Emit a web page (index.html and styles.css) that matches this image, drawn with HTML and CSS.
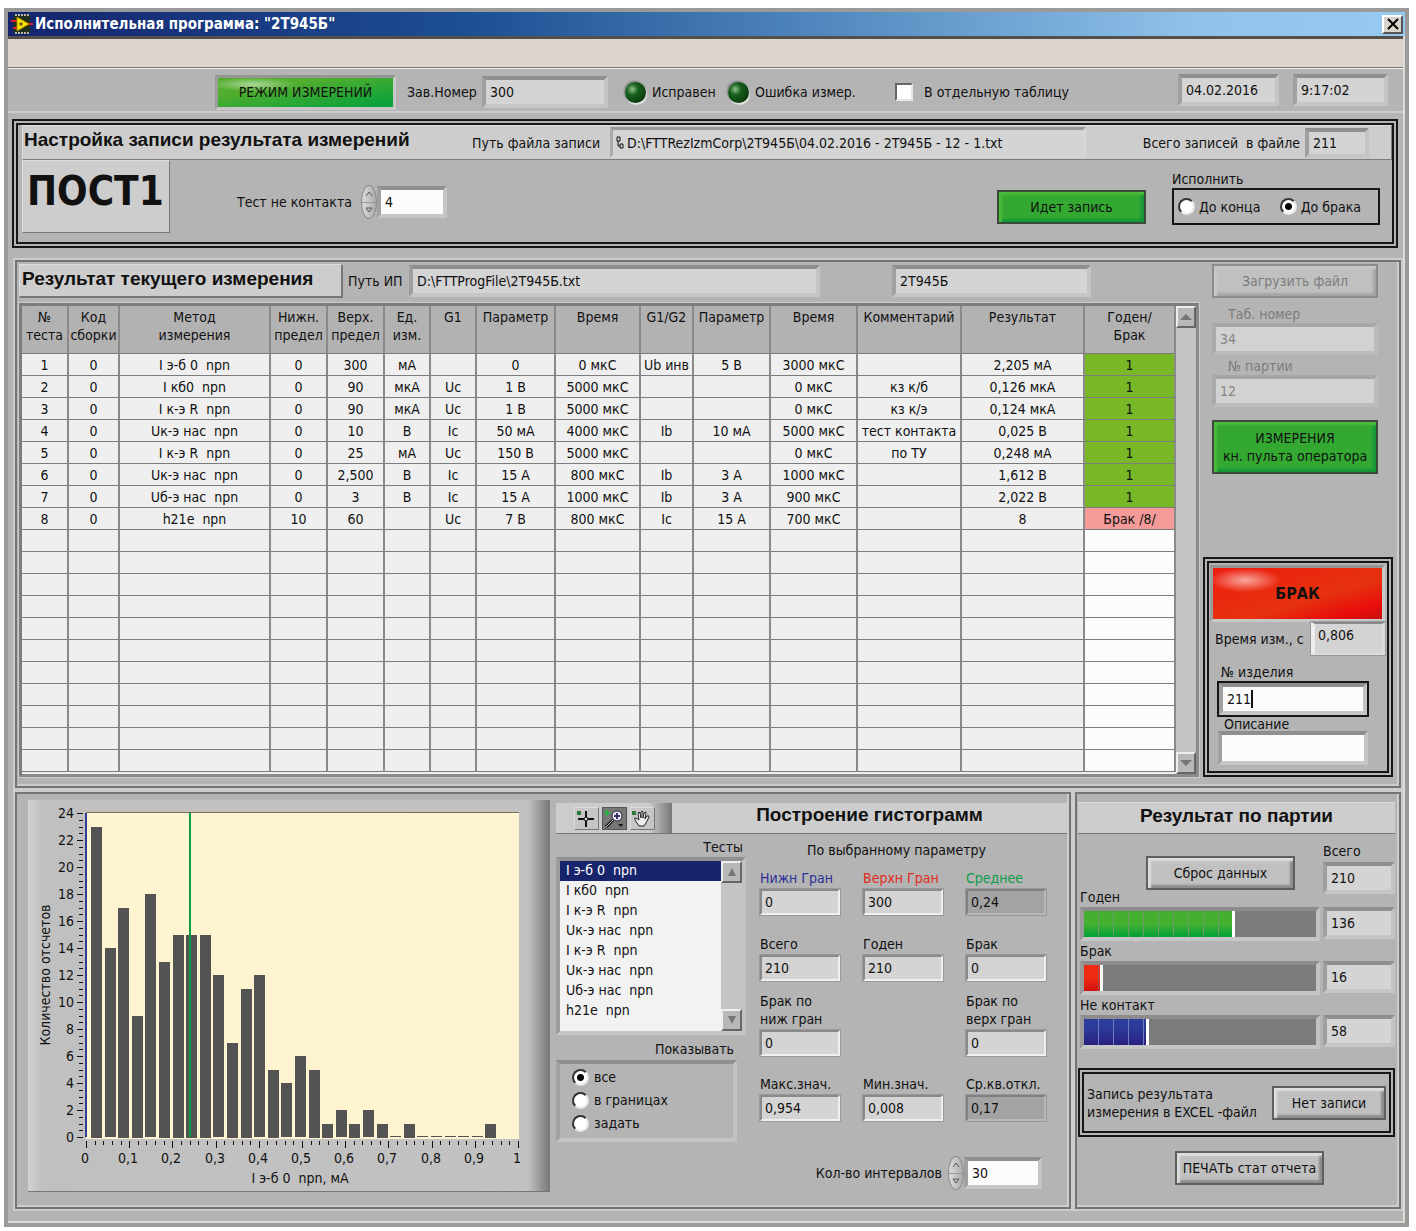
FILE: index.html
```html
<!DOCTYPE html>
<html lang="ru">

<head>
    <meta charset="UTF-8">
    <meta name="viewport" content="width=device-width, initial-scale=1.0">
    <title>Исполнительная программа: "2Т945Б"</title>
    <link rel="stylesheet" href="styles.css">
</head>

<body>
    <div class="window">
        <div class="titlebar">
            <svg class="app-icon" width="22" height="20" viewBox="0 0 22 20">
                <rect x="3" y="1" width="16" height="18" fill="#20301c"/>
                <path d="M4 1h14M4 19h14" stroke="#b9b9a0" stroke-width="2" stroke-dasharray="2 1"/>
                <path d="M0 7h7M15 10h7M2 14h5" stroke="#e02020" stroke-width="2"/>
                <path d="M6 3l12 7-12 7z" fill="#ffe400" stroke="#a88a00"/>
                <path d="M8 10h4M10 8v4" stroke="#333" stroke-width="1"/>
            </svg>
            <h1>Исполнительная программа: "2Т945Б"</h1>
            <button class="close-btn" aria-label="Закрыть">
                <svg width="12" height="12" viewBox="0 0 12 12"><path d="M1 1l10 10M11 1L1 11" stroke="#000" stroke-width="2"/></svg>
            </button>
        </div>
        <div class="menubar"></div>

        <div class="toolbar">
            <div class="lamp lamp-green mode">РЕЖИМ ИЗМЕРЕНИЙ</div>
            <div class="tool serial">
                <label for="serial">Зав.Номер</label>
                <input class="field" id="serial" value="300" readonly>
            </div>
            <div class="tool led-ok"><span class="led"></span>Исправен</div>
            <div class="tool led-err"><span class="led"></span>Ошибка измер.</div>
            <label class="tool"><input type="checkbox" class="check">В отдельную таблицу</label>
            <div class="clock">
                <input class="field date" value="04.02.2016" aria-label="Дата" readonly>
                <input class="field time" value="9:17:02" aria-label="Время" readonly>
            </div>
        </div>

        <!-- Recording setup -->
        <div class="frame setup">
            <div class="strip">
                <h2>Настройка записи результата измерений</h2>
                <label for="recPath">Путь файла записи</label>
                <div class="path">
                    <svg width="8" height="14" viewBox="0 0 8 14"><path d="M1 1h3v4H1zM4 8h3v4H4zM2 5v5h2" fill="none" stroke="#111"/></svg>
                    <input id="recPath" value="D:\FTTRezIzmCorp\2Т945Б\04.02.2016 - 2Т945Б - 12 - 1.txt" readonly>
                </div>
                <label class="total-label" for="recTotal">Всего записей&nbsp; в файле</label>
                <input class="field rec-total" id="recTotal" value="211" readonly>
            </div>
            <div class="setup-body">
                <div class="post">ПОСТ1</div>
                <div class="contact">
                    <label for="contactTest">Тест не контакта</label>
                    <div class="spin">
                        <button aria-label="Больше"><svg width="8" height="8" viewBox="0 0 8 8"><path d="M1 6l3-4 3 4" fill="none" stroke="#555"/></svg></button>
                        <button aria-label="Меньше"><svg width="8" height="8" viewBox="0 0 8 8"><path d="M1 2h6l-3 4z" fill="none" stroke="#555"/></svg></button>
                    </div>
                    <input class="field edit" id="contactTest" value="4">
                </div>
                <button class="btn btn-green rec-btn">Идет запись</button>
                <fieldset class="run-mode">
                    <legend>Исполнить</legend>
                    <div class="run-options">
                        <label><input type="radio" name="run">До конца</label>
                        <label><input type="radio" name="run" checked>До брака</label>
                    </div>
                </fieldset>
            </div>
        </div>

        <!-- Current measurement -->
        <div class="panel results">
            <div class="results-main">
                <div class="results-head">
                    <h2 class="plate">Результат текущего измерения</h2>
                    <label for="progPath">Путь ИП</label>
                    <input class="field prog-path" id="progPath" value="D:\FTTProgFile\2Т945Б.txt" readonly>
                    <input class="field prog-name" value="2Т945Б" aria-label="Прибор" readonly>
                </div>
                <div class="table-frame">
                    <table>
                        <colgroup>
                            <col class="w47"><col class="w51"><col class="w151"><col class="w57"><col class="w57">
                            <col class="w46"><col class="w46"><col class="w79"><col class="w85"><col class="w53">
                            <col class="w77"><col class="w87"><col class="w104"><col class="w123"><col class="w91">
                        </colgroup>
                        <thead>
                            <tr>
                                <th>№<br>теста</th>
                                <th>Код<br>сборки</th>
                                <th>Метод<br>измерения</th>
                                <th>Нижн.<br>предел</th>
                                <th>Верх.<br>предел</th>
                                <th>Ед.<br>изм.</th>
                                <th>G1</th>
                                <th>Параметр</th>
                                <th>Время</th>
                                <th>G1/G2</th>
                                <th>Параметр</th>
                                <th>Время</th>
                                <th>Комментарий</th>
                                <th>Результат</th>
                                <th>Годен/<br>Брак</th>
                            </tr>
                        </thead>
                        <tbody id="rows"></tbody>
                    </table>
                    <div class="scroll">
                        <button aria-label="Вверх"><svg width="12" height="8" viewBox="0 0 12 8"><path d="M0 7l6-6 6 6z" fill="#777"/></svg></button>
                        <button aria-label="Вниз"><svg width="12" height="8" viewBox="0 0 12 8"><path d="M0 1l6 6 6-6z" fill="#777"/></svg></button>
                    </div>
                </div>
            </div>

            <div class="side">
                <div class="side-top">
                    <button class="btn load" disabled>Загрузить файл</button>
                    <label for="tabNo">Таб. номер</label>
                    <input class="field" id="tabNo" value="34" disabled>
                    <label for="lotNo">№ партии</label>
                    <input class="field" id="lotNo" value="12" disabled>
                    <button class="btn btn-green measure">ИЗМЕРЕНИЯ<br>кн. пульта оператора</button>
                </div>
                <div class="frame verdict">
                    <div class="lamp lamp-red">БРАК</div>
                    <div class="elapsed">
                        <label for="elapsed">Время изм., с</label>
                        <input class="mini" id="elapsed" value="0,806" readonly>
                    </div>
                    <label class="item-label" for="itemNo">№ изделия</label>
                    <div class="focus-box"><input class="field edit" id="itemNo" value="211"><span class="caret"></span></div>
                    <label class="note-label" for="note">Описание</label>
                    <input class="field edit note" id="note">
                </div>
            </div>
        </div>

        <div class="bottom">
            <!-- Histogram -->
            <div class="panel histogram">
                <div class="chart">
                    <svg id="chart" width="522" height="392" viewBox="0 0 522 392"></svg>
                </div>
                <div class="hist-side">
                    <div class="hist-head">
                        <div class="tools">
                            <button aria-label="Курсор"><svg width="22" height="20" viewBox="0 0 22 20"><path d="M2 3h4v4H2z" fill="#2d7a38"/><path d="M3 11h16M11 3v16" stroke="#111" stroke-width="2"/><circle cx="11" cy="11" r="2" fill="#ccc" stroke="#111"/></svg></button>
                            <button class="active" aria-label="Масштаб"><svg width="22" height="20" viewBox="0 0 22 20"><path d="M1 5h6M4 2v6" stroke="#33b045" stroke-width="2"/><path d="M10 12l-7 7" stroke="#111" stroke-width="3"/><path d="M10 12l-7 7" stroke="#ccc"/><circle cx="14" cy="8" r="5" fill="#eef" stroke="#223"/><path d="M11 8h6M14 5v6" stroke="#336" stroke-width="2"/><path d="M15 16h5l-2 3z" fill="#111"/></svg></button>
                            <button aria-label="Сдвиг"><svg width="22" height="20" viewBox="0 0 22 20"><path d="M1 3h4v4H1z" fill="#2d7a38"/><path d="M8 18l-4-6q-1-3 1-2l3 2-1-7q1-2 2 0l1 5V4q1-2 2 0v6l1-5q2-2 2 0l-1 6 2-3q2-1 2 1l-3 6-2 3z" fill="#eee" stroke="#222"/></svg></button>
                        </div>
                        <h2>Построение гистограмм</h2>
                    </div>
                    <div class="hist-body">
                        <div class="hist-left">
                            <label for="tests">Тесты</label>
                            <div class="listbox">
                                <select id="tests" size="8">
                                    <option selected>I э-б 0&nbsp; npn</option>
                                    <option>I кб0&nbsp; npn</option>
                                    <option>I к-э R&nbsp; npn</option>
                                    <option>Uк-э нас&nbsp; npn</option>
                                    <option>I к-э R&nbsp; npn</option>
                                    <option>Uк-э нас&nbsp; npn</option>
                                    <option>Uб-э нас&nbsp; npn</option>
                                    <option>h21e&nbsp; npn</option>
                                </select>
                                <div class="scroll">
                                    <button aria-label="Вверх"><svg width="10" height="10" viewBox="0 0 10 10"><path d="M1 9l4-8 4 8z" fill="#777"/></svg></button>
                                    <button aria-label="Вниз"><svg width="10" height="10" viewBox="0 0 10 10"><path d="M1 1l4 8 4-8z" fill="#777"/></svg></button>
                                </div>
                            </div>
                            <span class="show-label" id="showLabel">Показывать</span>
                            <div class="show-box" role="radiogroup" aria-labelledby="showLabel">
                                <label><input type="radio" name="show" checked>все</label>
                                <label><input type="radio" name="show">в границах</label>
                                <label><input type="radio" name="show">задать</label>
                            </div>
                        </div>
                        <div class="hist-right">
                            <h3>По выбранному параметру</h3>
                            <div class="stats">
                                <div class="stat"><label class="blue" for="s1">Нижн Гран</label><input class="mini" id="s1" value="0" readonly></div>
                                <div class="stat"><label class="red" for="s2">Верхн Гран</label><input class="mini" id="s2" value="300" readonly></div>
                                <div class="stat"><label class="green" for="s3">Среднее</label><input class="mini dark" id="s3" value="0,24" readonly></div>
                                <div class="stat"><label for="s4">Всего</label><input class="mini" id="s4" value="210" readonly></div>
                                <div class="stat"><label for="s5">Годен</label><input class="mini" id="s5" value="210" readonly></div>
                                <div class="stat"><label for="s6">Брак</label><input class="mini" id="s6" value="0" readonly></div>
                                <div class="stat"><label for="s7">Брак по<br>ниж гран</label><input class="mini" id="s7" value="0" readonly></div>
                                <div class="stat last-col"><label for="s8">Брак по<br>верх гран</label><input class="mini" id="s8" value="0" readonly></div>
                                <div class="stat"><label for="s9">Макс.знач.</label><input class="mini" id="s9" value="0,954" readonly></div>
                                <div class="stat"><label for="s10">Мин.знач.</label><input class="mini" id="s10" value="0,008" readonly></div>
                                <div class="stat"><label for="s11">Ср.кв.откл.</label><input class="mini dark" id="s11" value="0,17" readonly></div>
                            </div>
                            <div class="intervals">
                                <label for="intervals">Кол-во интервалов</label>
                                <div class="spin">
                                    <button aria-label="Больше"><svg width="8" height="8" viewBox="0 0 8 8"><path d="M1 6l3-4 3 4" fill="none" stroke="#555"/></svg></button>
                                    <button aria-label="Меньше"><svg width="8" height="8" viewBox="0 0 8 8"><path d="M1 2h6l-3 4z" fill="none" stroke="#555"/></svg></button>
                                </div>
                                <input class="field edit" id="intervals" value="30">
                            </div>
                        </div>
                    </div>
                </div>
            </div>

            <!-- Lot totals -->
            <div class="panel lot">
                <h2>Результат по партии</h2>
                <div class="lot-top">
                    <button class="btn">Сброс данных</button>
                    <div class="lot-total">
                        <label for="lotTotal">Всего</label>
                        <input class="field" id="lotTotal" value="210" readonly>
                    </div>
                </div>
                <div class="lot-row first">
                    <label for="good">Годен</label>
                    <div class="bar"><div class="fill fill-green" style="width: 65%"></div></div>
                    <input class="field" id="good" value="136" readonly>
                </div>
                <div class="lot-row">
                    <label for="bad">Брак</label>
                    <div class="bar"><div class="fill fill-red" style="width: 8%"></div></div>
                    <input class="field" id="bad" value="16" readonly>
                </div>
                <div class="lot-row">
                    <label for="noContact">Не контакт</label>
                    <div class="bar"><div class="fill fill-blue" style="width: 28%"></div></div>
                    <input class="field" id="noContact" value="58" readonly>
                </div>
                <div class="frame excel">
                    <span>Запись результата<br>измерения в EXCEL -файл</span>
                    <button class="btn">Нет записи</button>
                </div>
                <button class="btn print">ПЕЧАТЬ стат отчета</button>
            </div>
        </div>
    </div>

    <script>
        var tests = [
            ["1", "0", "I э-б 0  npn", "0", "300", "мА", "", "0", "0 мкС", "Ub инв", "5 В", "3000 мкС", "", "2,205 мА", "1"],
            ["2", "0", "I кб0  npn", "0", "90", "мкА", "Uc", "1 В", "5000 мкС", "", "", "0 мкС", "кз к/б", "0,126 мкА", "1"],
            ["3", "0", "I к-э R  npn", "0", "90", "мкА", "Uc", "1 В", "5000 мкС", "", "", "0 мкС", "кз к/э", "0,124 мкА", "1"],
            ["4", "0", "Uк-э нас  npn", "0", "10", "В", "Ic", "50 мА", "4000 мкС", "Ib", "10 мА", "5000 мкС", "тест контакта", "0,025 В", "1"],
            ["5", "0", "I к-э R  npn", "0", "25", "мА", "Uc", "150 В", "5000 мкС", "", "", "0 мкС", "по ТУ", "0,248 мА", "1"],
            ["6", "0", "Uк-э нас  npn", "0", "2,500", "В", "Ic", "15 А", "800 мкС", "Ib", "3 А", "1000 мкС", "", "1,612 В", "1"],
            ["7", "0", "Uб-э нас  npn", "0", "3", "В", "Ic", "15 А", "1000 мкС", "Ib", "3 А", "900 мкС", "", "2,022 В", "1"],
            ["8", "0", "h21e  npn", "10", "60", "", "Uc", "7 В", "800 мкС", "Ic", "15 А", "700 мкС", "", "8", "Брак /8/"]
        ];
        var rowCount = 19;
        var columnCount = 15;

        var rows = document.getElementById("rows");
        for (var r = 0; r < rowCount; r++) {
            var tr = document.createElement("tr");
            for (var c = 0; c < columnCount; c++) {
                var td = document.createElement("td");
                td.textContent = tests[r] ? tests[r][c] : "";
                if (tests[r] && c === columnCount - 1) {
                    td.className = tests[r][c] === "1" ? "pass" : "fail";
                }
                tr.appendChild(td);
            }
            rows.appendChild(tr);
        }

        // Histogram: 30 intervals, counts on the left axis
        var counts = [23, 14, 17, 9, 18, 13, 15, 15, 15, 12, 7, 11, 12, 5, 4, 6, 5, 1, 2, 1, 2, 1, 0, 1, 0, 0, 0, 0, 0, 1];
        var chart = document.getElementById("chart");
        var left = 58, top0 = 13, width = 432, height = 324;
        var bottom = top0 + height;

        function add(name, attrs, text) {
            var el = document.createElementNS("http://www.w3.org/2000/svg", name);
            for (var key in attrs) {
                el.setAttribute(key, attrs[key]);
            }
            if (text) {
                el.textContent = text;
            }
            chart.appendChild(el);
        }

        add("rect", { x: left, y: top0, width: width + 1, height: height + 2, "class": "plot" });
        add("rect", { x: left, y: top0 - 1, width: width + 1, height: 1, "class": "plot-top" });
        counts.forEach(function (n, i) {
            var h = Math.max(n * height / 24, 1);
            add("rect", { x: Math.round(left + 5 + i * 13.6), y: Math.round(bottom - h), width: 11, height: Math.round(h), "class": "column" });
        });
        add("rect", { x: left - 1, y: top0, width: 2, height: height, "class": "low-limit" });
        add("rect", { x: left + Math.round(0.24 * width) - 1, y: top0, width: 2, height: height, "class": "mean" });

        for (var i = 0; i <= 48; i++) {
            var y = Math.round(bottom - i * height / 48);
            var major = i % 4 === 0;
            add("rect", { x: left - (major ? 9 : 7), y: y, width: major ? 6 : 4, height: 1, "class": "tick" });
            if (major) {
                add("text", { x: left - 12, y: y + 5, "text-anchor": "end" }, String(i / 2));
            }
        }
        for (var k = 0; k <= 50; k++) {
            var x = Math.round(left + k * width / 50);
            var big = k % 5 === 0;
            add("rect", { x: x, y: bottom + 4, width: 1, height: big ? 7 : 4, "class": "tick" });
            if (big) {
                add("text", { x: x - 1, y: bottom + 26, "text-anchor": "middle" }, String(k / 50).replace(".", ","));
            }
        }
        add("text", { x: 272, y: 383, "text-anchor": "middle", "class": "axis" }, "I э-б 0\u00a0 npn, мА");
        add("text", { x: 0, y: 0, transform: "translate(22 175) rotate(-90)", "text-anchor": "middle", "class": "axis" }, "Количество отсчетов");
    </script>
</body>

</html>
```
FILE: styles.css
```css
* {
    box-sizing: border-box;
}

body {
    margin: 0;
    padding: 8px 7px 5px 4px;
    background: #fff;
    color: #111;
    font-family: Tahoma, "DejaVu Sans Condensed", "Noto Sans", sans-serif;
    font-size: 14px;
    line-height: 18px;
}

h1, h2, h3, fieldset {
    margin: 0;
    padding: 0;
}

h2 {
    font-family: Arial, "Liberation Sans", sans-serif;
    font-size: 19px;
    line-height: 24px;
    white-space: nowrap;
}

input, button, select {
    font: inherit;
    color: inherit;
}

button {
    padding: 0;
}

label {
    white-space: nowrap;
}

.window {
    border: 4px solid #9a9a9a;
    background: #b4b4b4;
    box-shadow: inset -2px -2px 0 #dedad4;
    min-width: 1380px;
}

/* Title bar */
.titlebar {
    display: flex;
    align-items: center;
    gap: 2px;
    height: 24px;
    padding: 0 2px 0 3px;
    background: linear-gradient(to right, #14246e, #1c4f93 33%, #4a80b9 55%, #8fc3ea 85%, #97caf0);
    color: #fff;
}

.titlebar h1 {
    font-size: 15px;
    line-height: 22px;
}

.close-btn {
    display: flex;
    align-items: center;
    justify-content: center;
    width: 21px;
    height: 19px;
    margin-left: auto;
    background: #d8d4cc;
    border: 2px solid;
    border-color: #fff #555 #555 #fff;
}

.menubar {
    height: 32px;
    margin-right: 2px;
    background: #dad4cd;
    border-top: 3px solid #55504c;
    border-bottom: 1px solid #777;
}

/* Bevelled controls */
.field {
    height: 32px;
    min-width: 0;
    padding: 0 4px;
    background: #d4d4d4;
    border: 4px solid;
    border-color: #8f8f8f #c4c4c4 #c6c6c6 #a0a0a0;
    border-radius: 0;
    outline: none;
}

.field.edit {
    background: #fcfcfc;
}

.field:disabled {
    color: #858585;
    background: #d2d2d2;
    border-color: #a6a6a6 #bcbcbc #bcbcbc #aaa;
}

.mini {
    width: 80px;
    height: 26px;
    padding: 0 3px;
    background: #d4d4d4;
    border: 2px solid;
    border-color: #8a8a8a #f0f0f0 #f0f0f0 #8a8a8a;
    outline: 1px solid #999;
    outline-offset: 0;
}

.mini.dark {
    background: #a3a3a3;
    border-color: #808080 #b8b8b8 #b8b8b8 #808080;
}

.btn {
    height: 34px;
    background: #c0c0c0;
    border: 2px solid #5f5f5f;
    border-radius: 0;
    box-shadow: inset 3px 3px 2px #dedede, inset -3px -3px 2px #8c8c8c;
    white-space: nowrap;
}

.btn:disabled {
    color: #7c7c7c;
    border-color: #8c8c8c;
    box-shadow: inset 3px 3px 2px #c8c8c8, inset -3px -3px 2px #a4a4a4;
}

.btn-green {
    background: #34a932;
    border-color: #3c4a3c;
    box-shadow: inset 3px 3px 2px #4cba3c, inset -3px -3px 3px #12963a;
}

.lamp {
    display: flex;
    align-items: center;
    justify-content: center;
    border: 3px solid;
    border-color: #959595 #c8c8c8 #c8c8c8 #9d9d9d;
}

.lamp-green {
    background: radial-gradient(ellipse 44px 7px at 20% 22%, rgba(255, 255, 255, 0.5), rgba(255, 255, 255, 0)), linear-gradient(to bottom right, #52ae2e 30%, #00a03c);
}

.lamp-red {
    background: radial-gradient(ellipse 36px 12px at 19% 24%, rgba(255, 255, 255, 0.6), rgba(255, 255, 255, 0)), linear-gradient(to bottom right, #ee1c0e, #e6320e 60%, #e80c0c 85%, #c81010);
}

.spin {
    display: flex;
    flex-direction: column;
    width: 16px;
    height: 34px;
    overflow: hidden;
    border-radius: 8px / 17px;
    background: linear-gradient(to right, #ddd, #aaa);
    border: 1px solid #8a8a8a;
}

.spin button {
    display: flex;
    flex: 1;
    align-items: center;
    justify-content: center;
    background: none;
    border: 0;
}

.spin button + button {
    border-top: 1px solid #999;
}

input[type="radio"] {
    appearance: none;
    flex: none;
    width: 17px;
    height: 17px;
    margin: 0;
    border: 2px solid;
    border-color: #333 #e8e8e8 #e8e8e8 #333;
    border-radius: 50%;
    background: #fff;
}

input[type="radio"]:checked {
    background: radial-gradient(circle, #000 3px, #fff 4px);
}

.check {
    appearance: none;
    width: 18px;
    height: 18px;
    margin: 0;
    background: #fff;
    border: 2px solid;
    border-color: #666 #e6e6e6 #e6e6e6 #666;
}

.frame {
    border: 6px double #161616;
}

.panel {
    border: 2px solid #747474;
    box-shadow: 0 0 0 2px #cdcdcd, inset -2px -2px 0 #cdcdcd;
}

/* Toolbar */
.toolbar {
    display: flex;
    align-items: center;
    height: 45px;
    margin-right: 2px;
    padding: 4px 15px 0 207px;
    border-top: 1px solid #eee;
    border-bottom: 2px solid #cdcdcd;
}

.mode {
    width: 181px;
    height: 35px;
    margin-right: 11px;
}

.tool {
    display: flex;
    align-items: center;
    gap: 6px;
}

.serial {
    width: 218px;
}

.serial label {
    width: 69px;
}

.serial .field {
    flex: 1;
    max-width: 126px;
}

.led-ok {
    width: 103px;
}

.led-err {
    width: 167px;
}

label.tool {
    gap: 11px;
}

.led {
    width: 21px;
    height: 21px;
    border-radius: 50%;
    background: radial-gradient(circle at 35% 35%, #8fc08f, #17601b 30%, #0b3c0d 75%);
    box-shadow: 1px 2px 1px #e4e4e4, -1px -1px 2px #777;
}

.clock {
    display: flex;
    gap: 14px;
    margin-left: auto;
    margin-top: -5px;
}

.date {
    width: 101px;
}

.time {
    width: 95px;
}

/* Recording setup */
.setup {
    margin: 6px 7px 0 4px;
    padding: 0 0 9px 4px;
}

.strip {
    display: flex;
    align-items: center;
    height: 35px;
    padding: 0 22px 0 1px;
    background: #cdcdcd;
    border: 1px solid;
    border-color: #ddd #7c7c7c #7c7c7c #ddd;
}

.strip h2 {
    width: 448px;
    padding-bottom: 5px;
}

.path {
    display: flex;
    align-items: center;
    flex: 0 1 476px;
    height: 31px;
    margin-left: 10px;
    padding: 0 3px;
    background: #d4d4d4;
    border: 3px solid;
    border-color: #999 #d6d6d6 #d6d6d6 #aaa;
}

.path input {
    flex: 1;
    padding: 0 3px;
    background: none;
    border: 0;
}

.total-label {
    margin-left: auto;
}

.strip .rec-total {
    width: 64px;
    height: 30px;
    margin-left: 5px;
}

.setup-body {
    display: flex;
    align-items: flex-start;
    padding-right: 12px;
}

.post {
    width: 148px;
    height: 73px;
    padding: 9px 0 0 4px;
    background: #cdcdcd;
    border: 1px solid;
    border-color: #ddd #777 #777 #ddd;
    font-size: 40px;
    line-height: 42px;
    font-weight: bold;
}

.contact {
    display: flex;
    align-items: center;
    margin: 25px 0 0 67px;
}

.contact label {
    width: 124px;
}

.contact .field {
    width: 70px;
}

.rec-btn {
    width: 149px;
    margin: 30px 26px 0 auto;
}

.run-mode {
    margin-top: 10px;
    border: 0;
}

.run-mode legend {
    padding: 0;
}

.run-options {
    display: flex;
    justify-content: space-between;
    align-items: center;
    width: 208px;
    height: 37px;
    padding: 0 17px 0 4px;
    border: 2px solid #161616;
}

.run-options label {
    display: flex;
    align-items: center;
    gap: 4px;
}

/* Current measurement */
.results {
    display: flex;
    margin: 12px 4px 0 7px;
    padding: 2px 6px 9px 2px;
}

.results-main {
    flex: 1;
    min-width: 0;
}

.results-head {
    display: flex;
    align-items: center;
    padding-right: 108px;
}

.plate {
    width: 323px;
    height: 33px;
    margin-right: 6px;
    padding: 2px;
    background: #cdcdcd;
    border: 1px solid;
    border-color: #ddd #777 #777 #ddd;
    box-shadow: 1px 1px 0 #777;
}

.results-head label {
    width: 61px;
}

.prog-path {
    flex: 0 1 411px;
}

.prog-name {
    width: 199px;
    margin-left: auto;
}

.table-frame {
    display: flex;
    align-items: stretch;
    margin-top: 6px;
    border: 3px solid;
    border-color: #7c7c7c #8a8a8a #8a8a8a #7c7c7c;
    outline: 1px solid #cdcdcd;
    background: #efefef;
}

table {
    flex: 1;
    align-self: flex-start;
    width: 100%;
    margin-bottom: 2px;
    table-layout: fixed;
    border-spacing: 0;
}

.w46 { width: 46px; }
.w47 { width: 47px; }
.w51 { width: 51px; }
.w53 { width: 53px; }
.w57 { width: 57px; }
.w77 { width: 77px; }
.w79 { width: 79px; }
.w85 { width: 85px; }
.w87 { width: 87px; }
.w91 { width: 91px; }
.w104 { width: 104px; }
.w123 { width: 123px; }
.w151 { width: 151px; }

th, td {
    padding: 0;
    border-right: 2px solid #8a8a8a;
    border-bottom: 1px solid #7c7c7c;
    font-weight: normal;
    text-align: center;
    white-space: pre;
}

th {
    height: 48px;
    padding-top: 2px;
    vertical-align: top;
    background: #b2b2b2;
}

td {
    height: 22px;
    line-height: 20px;
}

td:last-child {
    background: #fcfcfc;
}

td.pass {
    background: #78b726;
}

td.fail {
    background: #f49a98;
}

.scroll {
    display: flex;
    flex-direction: column;
    justify-content: space-between;
    width: 21px;
    background: #c4c4c4;
}

.scroll button {
    display: flex;
    align-items: center;
    justify-content: center;
    height: 22px;
    background: #b8b8b8;
    border: 2px solid;
    border-color: #eee #666 #666 #eee;
}

.side {
    display: flex;
    flex-direction: column;
    justify-content: space-between;
    width: 190px;
    margin-left: 4px;
}

.side-top {
    display: flex;
    flex-direction: column;
    padding: 0 15px 0 9px;
}

.side-top label {
    padding-left: 16px;
    color: #7c7c7c;
}

.load + label {
    margin-top: 7px;
}

.side-top .field + label {
    margin-top: 2px;
}

.measure {
    height: 54px;
    margin-top: 13px;
}

.verdict {
    display: flex;
    flex-direction: column;
    padding: 2px 2px 6px 1px;
}

.lamp-red {
    height: 57px;
    font-weight: bold;
    font-size: 16px;
}

.elapsed {
    display: flex;
    align-items: center;
    justify-content: space-between;
    padding-left: 5px;
}

.elapsed .mini {
    width: 74px;
    height: 33px;
    padding-bottom: 8px;
    border-width: 2px 3px 2px 4px;
    border-color: #8a8a8a #ddd #ddd #eee;
}

.item-label {
    margin-top: 8px;
    padding-left: 11px;
}

.focus-box {
    position: relative;
    width: 152px;
    margin: 0 7px;
    border: 2px solid #161616;
}

.focus-box .field {
    display: block;
    width: 100%;
}

.caret {
    position: absolute;
    left: 32px;
    top: 7px;
    width: 2px;
    height: 18px;
    background: #111;
}

.note-label {
    padding-left: 14px;
    line-height: 14px;
}

.note {
    width: 150px;
    height: 34px;
    margin-left: 8px;
}

/* Bottom panels */
.bottom {
    display: flex;
    gap: 4px;
    margin: 4px 4px 0 7px;
    padding-bottom: 14px;
}

.histogram {
    display: flex;
    flex: 1;
    padding: 6px 2px 15px 11px;
}

.chart {
    flex: none;
    height: 392px;
    background: linear-gradient(to right, #d2d2d2, #c0c0c0 14px, #c2c2c2 500px, #777);
    border-bottom: 1px solid #777;
}

.chart svg {
    display: block;
}

.chart text {
    font-size: 14px;
    fill: #111;
}

.plot {
    fill: #fff4d0;
}

.plot-top {
    fill: #77705f;
}

.column {
    fill: #535353;
}

.low-limit {
    fill: #2b3f98;
}

.mean {
    fill: #0a9d48;
}

.tick {
    fill: #111;
}

.hist-side {
    flex: 1;
    margin-left: 6px;
    padding-top: 3px;
}

.hist-head {
    display: flex;
    height: 31px;
    background: #cdcdcd;
    border-bottom: 1px solid #777;
}

.hist-head h2 {
    flex: 1;
    text-align: center;
}

.tools {
    display: flex;
    align-items: center;
    justify-content: center;
    gap: 3px;
    width: 116px;
    background: linear-gradient(to right, #ccc 80%, #777);
}

.tools button {
    display: flex;
    width: 25px;
    height: 23px;
    background: #c6c6c6;
    border: 1px solid;
    border-color: #ddd #777 #777 #ddd;
}

.tools .active {
    background: #777;
    border-color: #555;
}

.hist-body {
    display: flex;
}

.hist-left {
    display: flex;
    flex-direction: column;
    width: 190px;
    padding-top: 4px;
}

.hist-left > label {
    align-self: flex-end;
    padding-right: 3px;
}

.listbox {
    display: flex;
    height: 178px;
    margin-top: 1px;
    border: 4px solid;
    border-color: #909090 #c2c2c2 #c6c6c6 #9c9c9c;
}

.listbox select {
    flex: 1;
    padding: 0;
    overflow: hidden;
    background: #f2f2f2;
    border: 0;
    border-radius: 0;
    outline: none;
}

.listbox option {
    min-height: 20px;
    padding: 1px 6px 0;
    line-height: 19px;
}

.listbox option:checked {
    background: #17246c linear-gradient(#17246c, #17246c);
    -webkit-text-fill-color: #fff;
}

.show-label {
    align-self: flex-end;
    margin-top: 5px;
    padding-right: 12px;
}

.show-box {
    display: flex;
    flex-direction: column;
    gap: 5px;
    width: 181px;
    height: 82px;
    margin-top: 2px;
    padding: 4px 12px;
    border: 4px solid;
    border-color: #8f8f8f #c2c2c2 #c4c4c4 #a0a0a0;
}

.show-box label {
    display: flex;
    align-items: center;
    gap: 5px;
}

.hist-right {
    flex: 1;
    padding: 7px 0 0 14px;
}

h3 {
    padding-right: 34px;
    font-size: 14px;
    font-weight: normal;
    text-align: center;
}

.stats {
    display: grid;
    grid-template-columns: repeat(3, 80px);
    column-gap: 23px;
    grid-template-rows: 56px 66px 75px 65px;
    align-items: end;
}

.stat {
    display: flex;
    flex-direction: column;
    gap: 2px;
}

.last-col {
    grid-column: 3;
}

.blue {
    color: #2b2f98;
}

.red {
    color: #e02a1c;
}

.green {
    color: #0a9d48;
}

.intervals {
    display: flex;
    align-items: center;
    justify-content: flex-end;
    margin: 35px 25px 0 0;
}

.intervals .spin {
    margin-left: 6px;
}

.intervals .field {
    width: 78px;
}

/* Lot totals */
.lot {
    display: flex;
    flex-direction: column;
    width: 326px;
    padding: 8px 4px 20px 1px;
}

.lot > h2 {
    height: 32px;
    padding-top: 1px;
    background: #cdcdcd;
    border-top: 1px solid #ddd;
    border-bottom: 1px solid #777;
    text-align: center;
}

.lot-top {
    display: flex;
    justify-content: space-between;
    align-items: flex-end;
    padding-left: 68px;
    margin-top: 8px;
}

.lot .field {
    width: 72px;
}

.lot-top .btn {
    width: 149px;
    margin-bottom: 4px;
}

.lot-total {
    display: flex;
    flex-direction: column;
    gap: 2px;
    width: 72px;
}

.lot-row {
    display: grid;
    grid-template-columns: 1fr 72px;
    column-gap: 3px;
    padding-left: 2px;
}

.lot-row label {
    grid-column: 1 / 3;
    line-height: 20px;
}

.lot-row.first label {
    margin-top: -7px;
}

.bar {
    height: 34px;
    background: #7b7b7b;
    border: 4px solid;
    border-color: #8c8c8c #c2c2c2 #c6c6c6 #9a9a9a;
}

.fill {
    height: 100%;
    border-right: 3px solid #fff;
}

.fill-green {
    background: repeating-linear-gradient(to right, transparent 0 14px, #6a9a6a 14px 15px), linear-gradient(#45b030 50%, #00a035);
}

.fill-red {
    background: repeating-linear-gradient(to right, transparent 0 14px, #a05050 14px 15px), linear-gradient(#ee2a10 50%, #d01010);
}

.fill-blue {
    background: repeating-linear-gradient(to right, transparent 0 14px, #6a80b8 14px 15px), linear-gradient(#2c3c9c 30%, #2a2080);
}

.excel {
    display: flex;
    align-items: center;
    justify-content: space-between;
    height: 69px;
    margin-top: 19px;
    padding: 0 3px;
}

.excel .btn {
    width: 114px;
}

.print {
    align-self: center;
    width: 149px;
    margin: 14px 0 0 26px;
}
```
